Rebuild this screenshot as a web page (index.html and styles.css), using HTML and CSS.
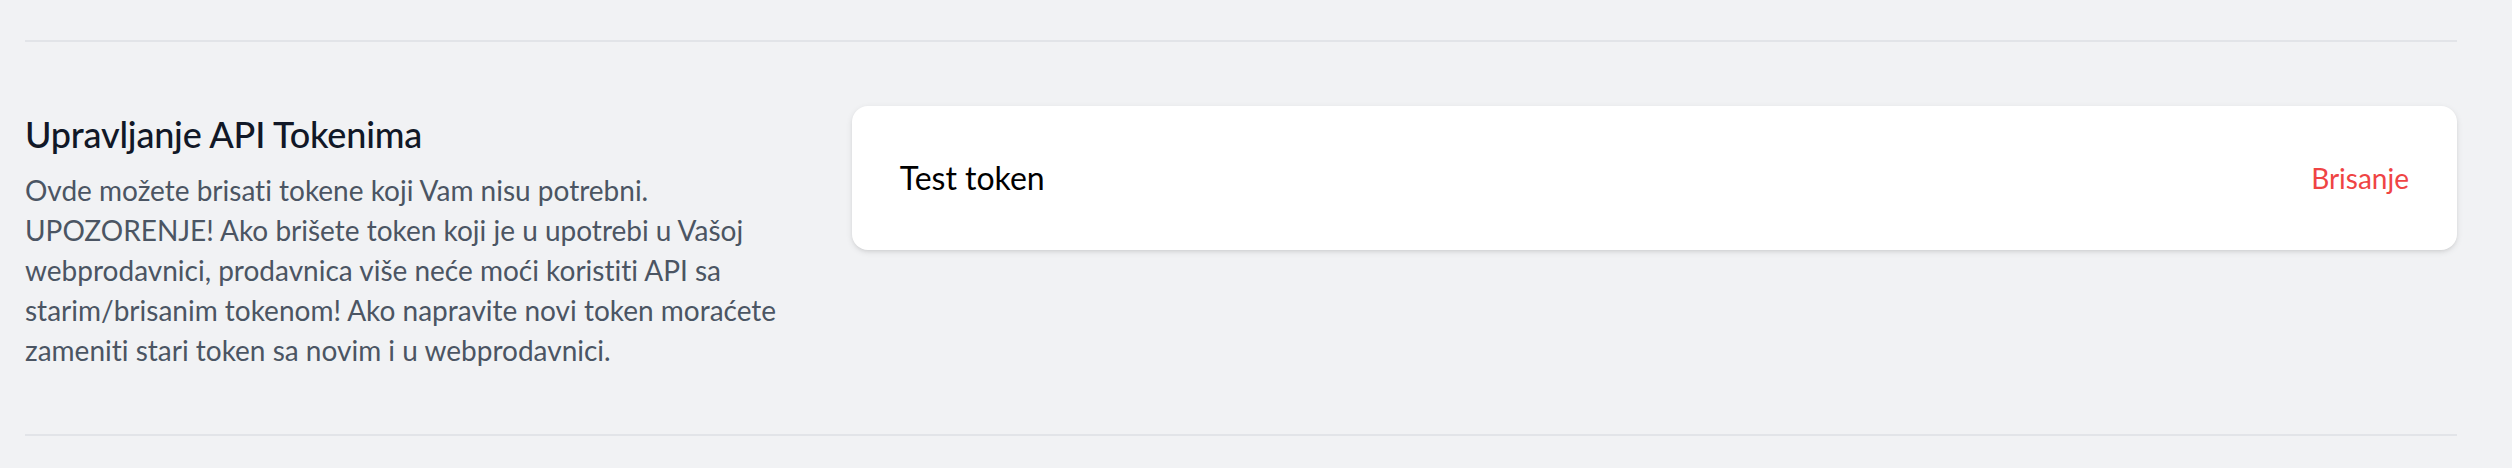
FILE: index.html
```html
<!DOCTYPE html>
<html lang="sr">
<head>
<meta charset="utf-8">
<title>API Tokeni</title>
<link rel="stylesheet" href="styles.css">
</head>
<body>
<div class="page">
  <div class="separator"><div class="rule"></div></div>
  <div class="section">
    <div class="section-info">
      <h3 class="section-title">Upravljanje API Tokenima</h3>
      <p class="section-desc">Ovde možete brisati tokene koji Vam nisu potrebni. UPOZORENJE! Ako brišete token koji je u upotrebi u Vašoj webprodavnici, prodavnica više neće moći koristiti API sa starim/brisanim tokenom! Ako napravite novi token moraćete zameniti stari token sa novim i u webprodavnici.</p>
    </div>
    <div class="section-content">
      <div class="card">
        <div class="token-row">
          <div class="token-name">Test token</div>
          <div class="token-actions">
            <button class="delete-btn" type="button">Brisanje</button>
          </div>
        </div>
      </div>
    </div>
  </div>
  <div class="separator"><div class="rule"></div></div>
</div>
</body>
</html>
```

FILE: styles.css
```css
* { box-sizing: border-box; }
html, body {
  margin: 0;
  padding: 0;
  background: #f1f2f4;
}
body {
  font-family: "Lato", "Noto Sans", sans-serif;
  font-variant-ligatures: none;
  color: #000;
  -webkit-font-smoothing: antialiased;
}
.page {
  width: 2432px;
  margin-left: 25px;
}
.separator {
  padding: 40px 0 64px;
}
.separator:last-child {
  padding: 64px 0 0;
}
.rule {
  border-top: 2px solid #e2e4e8;
}
.section {
  display: grid;
  grid-template-columns: 1fr 1fr 1fr;
  column-gap: 48px;
}
.section-info {
  grid-column: span 1;
}
.section-title {
  margin: 0;
  font-size: 36px;
  line-height: 56px;
  font-weight: 500;
  color: #111827;
  letter-spacing: -0.2px;
}
.section-desc {
  margin: 8px 0 0;
  font-size: 28px;
  line-height: 40px;
  color: #4b5563;
}
.section-content {
  grid-column: span 2;
}
.card {
  background: #fff;
  border-radius: 16px;
  padding: 48px;
  box-shadow: 0 2px 6px 0 rgba(0,0,0,0.1), 0 2px 4px -2px rgba(0,0,0,0.1);
}
.token-row {
  display: flex;
  align-items: center;
  justify-content: space-between;
}
.token-name {
  font-size: 32px;
  line-height: 48px;
}
.token-actions {
  display: flex;
  align-items: center;
  margin-left: 16px;
}
.delete-btn {
  margin-left: 48px;
  padding: 0;
  border: 0;
  background: none;
  font-family: inherit;
  font-size: 28px;
  line-height: 40px;
  color: #ef4444;
  cursor: pointer;
}
```
